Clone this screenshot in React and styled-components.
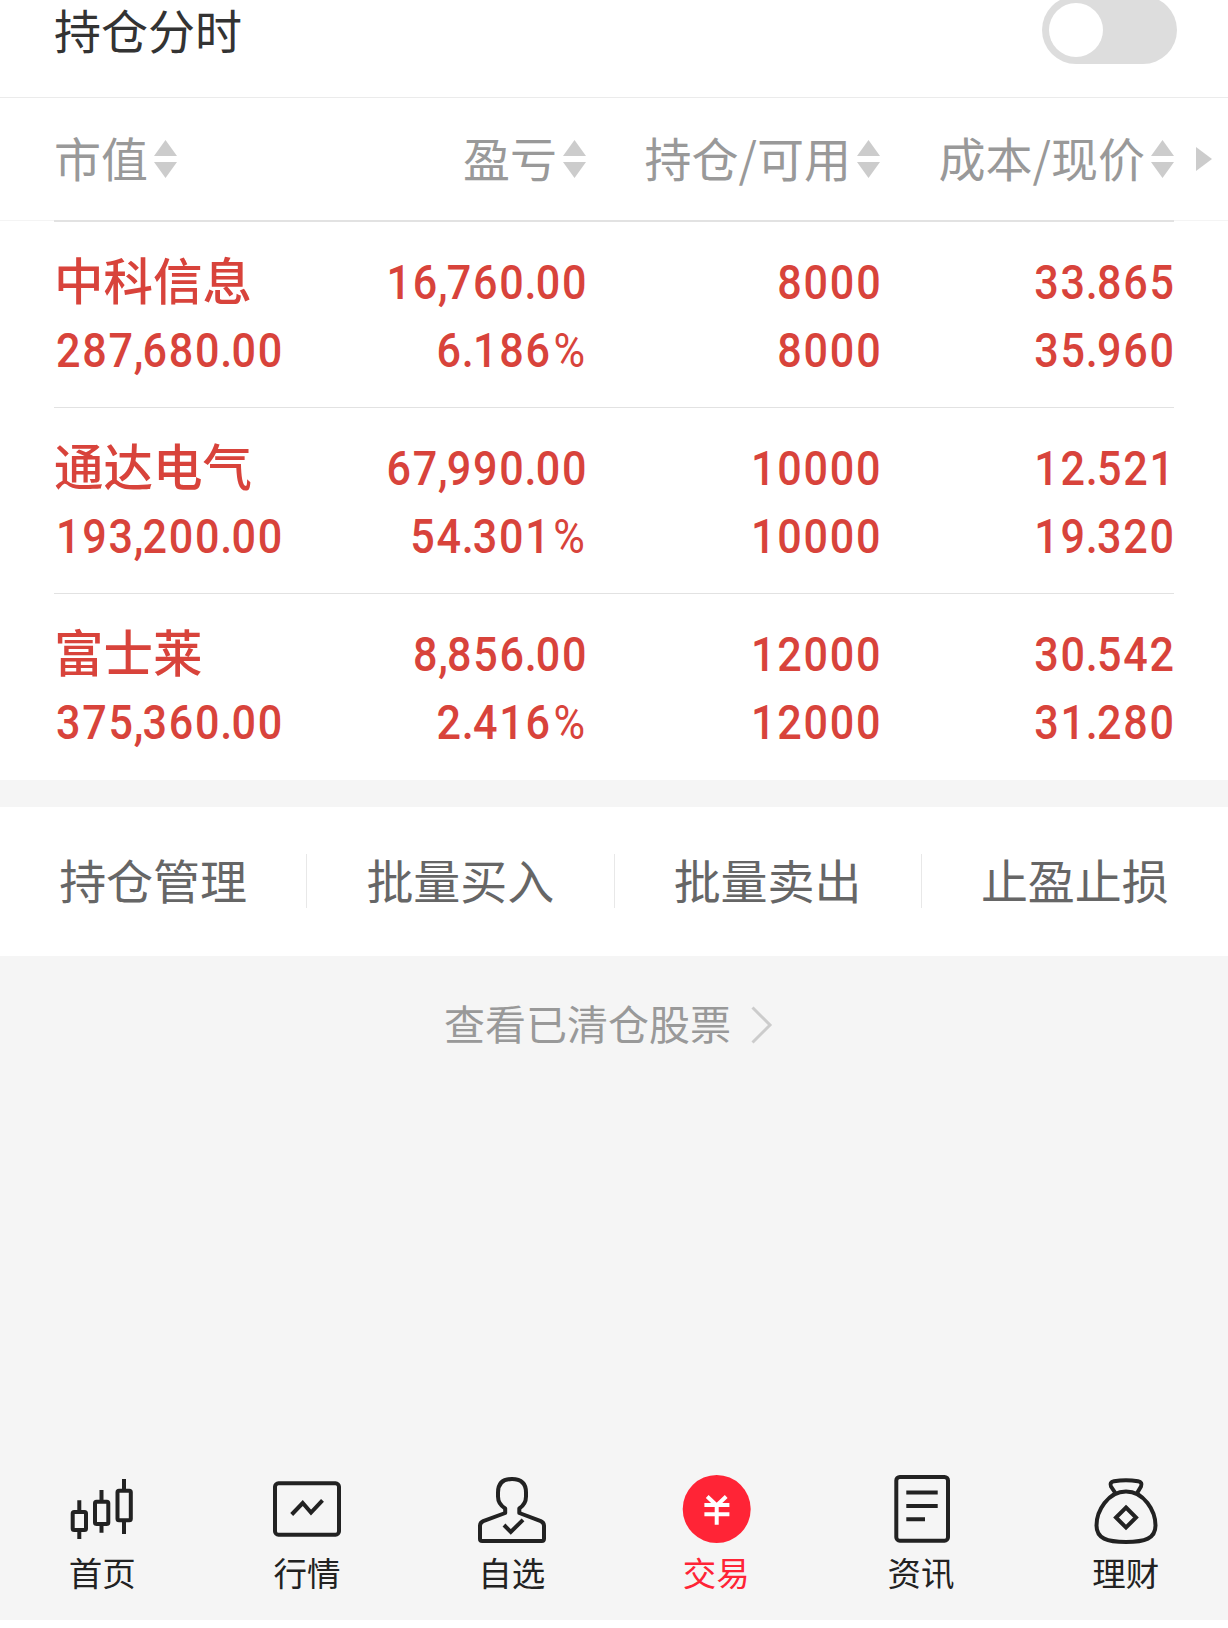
import React, { useState } from "react";
import styled, { createGlobalStyle } from "styled-components";

const columns = [
  { label: "市值", align: "left" },
  { label: "盈亏", align: "right" },
  { label: "持仓/可用", align: "right" },
  { label: "成本/现价", align: "right" },
];

const holdings = [
  { name: "中科信息", value: "287,680.00", cells: [["16,760.00", "6.186%"], ["8000", "8000"], ["33.865", "35.960"]] },
  { name: "通达电气", value: "193,200.00", cells: [["67,990.00", "54.301%"], ["10000", "10000"], ["12.521", "19.320"]] },
  { name: "富士莱", value: "375,360.00", cells: [["8,856.00", "2.416%"], ["12000", "12000"], ["30.542", "31.280"]] },
];

const actions = ["持仓管理", "批量买入", "批量卖出", "止盈止损"];

const HomeIcon = () => (
  <TabSvg viewBox="0 0 72 72">
    <rect x="6.700" y="38" width="13.300" height="18" rx="1.5" />
    <path d="M13.300 26.300V38M13.300 56v9" />
    <rect x="29" y="27.700" width="13.300" height="22.300" rx="1.5" />
    <path d="M35.500 16v11.700M35.500 50v8.700" />
    <rect x="51.500" y="16.700" width="13.300" height="29.600" rx="1.5" />
    <path d="M58 5v11.700M58 46.300V60" />
  </TabSvg>
);

const MarketIcon = () => (
  <TabSvg viewBox="0 0 72 72">
    <rect x="4" y="9.300" width="64" height="51.400" rx="3.5" />
    <path d="M20.700 40.500 31.700 29l8.300 9.500 11.500-12.200" strokeLinejoin="miter" />
  </TabSvg>
);

const PickIcon = () => (
  <TabSvg viewBox="0 0 72 72">
    <path d="M29.200 34.500v4.500L7.200 47.200Q4 48.600 4 52v13Q4 67 6.200 67h59.600q2.200 0 2.200-2.200V52q0-3.400-3.200-4.800L43.300 39v-4.500Q50 30 50 22.500V18.500q0-13.500-14-13.500T22 18.500v4q0 7.500 7.200 12Z" />
    <path d="M28 51l6.800 7L47 45.800" strokeLinejoin="miter" />
  </TabSvg>
);

const TradeIcon = () => (
  <TabSvg viewBox="0 0 72 72">
    <circle cx="36.700" cy="35" r="34" fill="#ff2436" stroke="none" />
    <path d="M27.200 22.500 36.700 31.500l9.500-9M24.400 31h25M24.400 40.200h25M36.700 31v19.700" stroke="#fff" />
  </TabSvg>
);

const NewsIcon = () => (
  <TabSvg viewBox="0 0 72 72">
    <rect x="11.300" y="3" width="51.700" height="63.700" rx="3.5" />
    <path d="M21.300 18.400H52.700M21.300 32H52.700M21.300 45.300H40" />
  </TabSvg>
);

const WealthIcon = () => (
  <TabSvg viewBox="0 0 72 72">
    <path d="M26 20l-5-7.500q-1.800-4.200 3-5.200 12-2.300 24 0 4.800 1 3 5.200L46.500 20" />
    <path d="M36 17.500C18 17.500 6.500 37 6.500 51.500c0 13 10.500 16.500 29.500 16.500S65.500 64.500 65.500 51.500C65.500 37 54 17.500 36 17.500Z" />
    <path d="M36 33.500 46 43.500 36 53.500 26 43.500Z" strokeLinejoin="miter" />
  </TabSvg>
);

const tabs = [
  { label: "首页", Icon: HomeIcon },
  { label: "行情", Icon: MarketIcon },
  { label: "自选", Icon: PickIcon },
  { label: "交易", Icon: TradeIcon },
  { label: "资讯", Icon: NewsIcon },
  { label: "理财", Icon: WealthIcon },
];

const SortIcon = () => (
  <SortSvg viewBox="0 0 23 38">
    <path d="M11.500 0 23 16H0ZM11.500 38 23 22H0Z" />
  </SortSvg>
);

// separators sit tighter than digits, the percent sign is lighter
const Figure = ({ children, align }) => (
  <Num $align={align}>
    {children.split(/([.,%])/).map((part, i) => {
      if (part === "%") return <Percent key={i}>{part}</Percent>;
      if (part === "." || part === ",") return <Mark key={i}>{part}</Mark>;
      return part;
    })}
  </Num>
);

const App = () => {
  const [chart, setChart] = useState(false);
  const [active, setActive] = useState("交易");

  return (
    <Page>
      <GlobalStyle />
      <ChartBar>
        <ChartLabel>持仓分时</ChartLabel>
        <Toggle onClick={() => setChart(!chart)} role="switch" aria-checked={chart} $on={chart}>
          <Knob />
        </Toggle>
      </ChartBar>

      <HeadRow>
        {columns.map(({ label, align }) => (
          <HeadCell key={label} $align={align}>
            <HeadLabel>{label}</HeadLabel>
            <SortIcon />
          </HeadCell>
        ))}
        <MoreSvg viewBox="0 0 16 24">
          <path d="M0 0 16 12 0 24Z" />
        </MoreSvg>
      </HeadRow>

      <List>
        {holdings.map(({ name, value, cells }) => (
          <Row key={name}>
            <Cell $align="left">
              <Name>{name}</Name>
              <Figure align="left">{value}</Figure>
            </Cell>
            {cells.map(([top, bottom], i) => (
              <Cell key={i}>
                <Figure>{top}</Figure>
                <Figure>{bottom}</Figure>
              </Cell>
            ))}
          </Row>
        ))}
      </List>

      <Actions>
        {actions.map((label) => (
          <Action key={label}>{label}</Action>
        ))}
      </Actions>

      <Cleared>
        <ClearedLabel>查看已清仓股票</ClearedLabel>
        <ChevronSvg viewBox="0 0 22 38">
          <path d="M1.500 1.500 19 19 1.500 36.500" />
        </ChevronSvg>
      </Cleared>

      <TabBar>
        {tabs.map(({ label, Icon }) => (
          <Tab key={label} $active={label === active} onClick={() => setActive(label)}>
            <Icon />
            <TabLabel>{label}</TabLabel>
          </Tab>
        ))}
      </TabBar>
    </Page>
  );
};

export default App;

/* note: Styled-Components section */

const GlobalStyle = createGlobalStyle`
      *{
      box-sizing:border-box;
      }

      body{
      margin:0;
      background-color:#fff;
      font-family:'Noto Sans CJK SC', sans-serif;
      }
      `;

const Page = styled.div`
      display:flex;
      flex-direction:column;
      width:1228px;
      height:1628px;
      border-bottom:8px solid #fff;
      background-color:#f5f5f5;
      `;

const ChartBar = styled.div`
      display:flex;
      align-items:center;
      justify-content:space-between;
      flex:none;
      height:98px;
      padding:0 51px 38px 54px;
      border-bottom:1px solid #ebebeb;
      background-color:#fff;
      `;

const ChartLabel = styled.div`
      padding-bottom:2px;
      color:#333;
      font-size:47px;
      line-height:58px;
      `;

const Toggle = styled.div`
      display:flex;
      align-items:center;
      justify-content:${(props) => props.$on ? 'flex-end' : 'flex-start'};
      flex:none;
      width:135px;
      height:68px;
      padding:0 7px;
      border-radius:34px;
      background-color:${(props) => props.$on ? '#ff2436' : '#ddd'};
      `;

const Knob = styled.div`
      width:54px;
      height:54px;
      border-radius:50%;
      background-color:#fff;
      `;

const HeadRow = styled.div`
      display:grid;
      grid-template-columns:256px 276px 294px 294px 38px;
      align-items:center;
      flex:none;
      height:122px;
      padding-left:54px;
      background-color:#fff;
      `;

const HeadCell = styled.div`
      display:flex;
      align-items:center;
      justify-content:${(props) => props.$align === 'left' ? 'flex-start' : 'flex-end'};
      gap:6px;
      `;

const HeadLabel = styled.span`
      padding-bottom:5px;
      color:#999;
      font-size:47px;
      line-height:60px;
      white-space:nowrap;
      `;

const SortSvg = styled.svg`
      flex:none;
      width:23px;
      height:38px;
      fill:#ccc;
      `;

const MoreSvg = styled.svg`
      width:16px;
      height:24px;
      margin-left:22px;
      fill:#ccc;
      `;

const List = styled.div`
      flex:none;
      height:560px;
      padding:0 54px;
      border-top:1px solid #f4f4f4;
      background-color:#fff;
      `;

const Row = styled.div`
      display:grid;
      grid-template-columns:256px 276px 294px 294px;
      height:186px;
      padding-top:29px;
      border-top:1px solid #e2e2e2;
      color:#d8433b;

      &:first-child{
        height:187px;
        margin-top:-1px;
        border-top-width:2px;
      }
      `;

const Cell = styled.div`
      display:flex;
      flex-direction:column;
      align-items:${(props) => props.$align === 'left' ? 'flex-start' : 'flex-end'};
      `;

const Name = styled.div`
      height:68px;
      font-size:49.5px;
      font-weight:500;
      line-height:55px;
      white-space:nowrap;
      `;

const Num = styled.div`
      height:68px;
      font-family:'Roboto', sans-serif;
      font-size:49px;
      font-weight:500;
      letter-spacing:2px;
      line-height:63px;
      white-space:nowrap;
      transform:scaleX(.88);
      transform-origin:${(props) => props.$align === 'left' ? 'left' : 'right'} center;
      margin-left:${(props) => props.$align === 'left' ? '2px' : '0'};
      margin-right:${(props) => props.$align === 'left' ? '0' : '-2px'};
      `;

const Mark = styled.span`
      margin:0 -3px 0 -1.2px;
      `;

const Percent = styled.span`
      margin:0 1px 0 2px;
      font-weight:400;
      `;

const Actions = styled.div`
      display:flex;
      align-items:center;
      flex:none;
      height:149px;
      margin-top:27px;
      padding-bottom:2px;
      background-color:#fff;
      `;

const Action = styled.div`
      flex:1;
      height:54px;
      border-right:1px solid #e8e8e8;
      color:#666;
      font-size:47px;
      line-height:50px;
      text-align:center;

      &:last-child{
        border-right:none;
      }
      `;

const Cleared = styled.div`
      display:flex;
      align-items:center;
      justify-content:center;
      gap:20px;
      flex:none;
      height:138px;
      padding-right:11px;
      `;

const ClearedLabel = styled.span`
      padding-bottom:7px;
      color:#999;
      font-size:41px;
      line-height:60px;
      `;

const ChevronSvg = styled.svg`
      width:22px;
      height:38px;
      fill:none;
      stroke:#ccc;
      stroke-width:3;
      `;

const TabBar = styled.div`
      display:flex;
      flex:none;
      height:146px;
      margin-top:auto;
      `;

const Tab = styled.div`
      display:flex;
      flex-direction:column;
      align-items:center;
      flex:1;
      color:${(props) => props.$active ? '#ff2436' : '#222'};
      `;

const TabSvg = styled.svg`
      width:72px;
      height:72px;
      fill:none;
      stroke:#222;
      stroke-width:4;
      stroke-linejoin:round;
      `;

const TabLabel = styled.span`
      margin-top:5px;
      font-size:33.5px;
      line-height:41px;
      `;
